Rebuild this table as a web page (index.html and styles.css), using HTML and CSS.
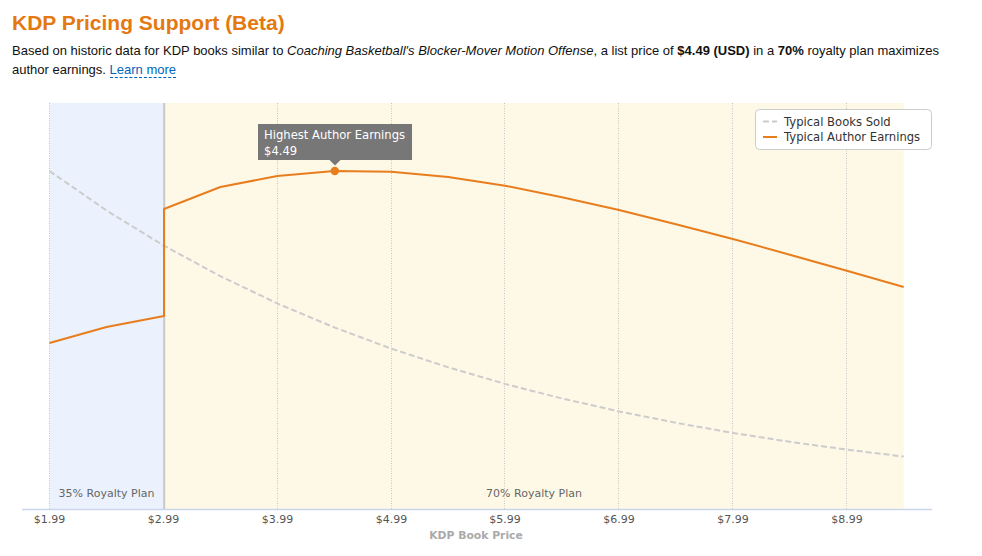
FILE: index.html
```html
<!DOCTYPE html>
<html lang="en">
<head>
<meta charset="utf-8">
<title>KDP Pricing Support (Beta)</title>
<link rel="stylesheet" href="styles.css">
</head>
<body>
<div class="header">
  <h1 class="title">KDP Pricing Support (Beta)</h1>
  <p class="summary"><span>Based on historic data for KDP books similar to </span><i>Coaching Basketball's Blocker-Mover Motion Offense</i><span>, a list price of </span><b>$4.49 (USD)</b><span> in a </span><b>70%</b><span> royalty plan maximizes</span><br><span>author earnings. </span><a class="learn" href="#">Learn more</a></p>
</div>
<svg class="chart" width="982" height="468" viewBox="0 88 982 468" xmlns="http://www.w3.org/2000/svg">
  <rect class="band-35" x="49.5" y="103" width="114.5" height="406"/>
  <rect class="band-70" x="164" y="103" width="739.7" height="406"/>
  <g class="grid">
    <line x1="49.5" y1="103" x2="49.5" y2="509"/>
    <line x1="277.5" y1="103" x2="277.5" y2="509"/>
    <line x1="391.5" y1="103" x2="391.5" y2="509"/>
    <line x1="504.5" y1="103" x2="504.5" y2="509"/>
    <line x1="618.5" y1="103" x2="618.5" y2="509"/>
    <line x1="732.5" y1="103" x2="732.5" y2="509"/>
    <line x1="846.5" y1="103" x2="846.5" y2="509"/>
  </g>
  <rect class="divider" x="163.2" y="103" width="2" height="406"/>
  <text class="plan" x="106.5" y="497">35% Royalty Plan</text>
  <text class="plan" x="534" y="497">70% Royalty Plan</text>
  <line class="axis" x1="22" y1="509.5" x2="932" y2="509.5"/>
  <g class="ticks">
    <text x="49.5" y="523">$1.99</text>
    <text x="163.5" y="523">$2.99</text>
    <text x="277.5" y="523">$3.99</text>
    <text x="391.5" y="523">$4.99</text>
    <text x="505" y="523">$5.99</text>
    <text x="619" y="523">$6.99</text>
    <text x="733" y="523">$7.99</text>
    <text x="847" y="523">$8.99</text>
  </g>
  <text class="axis-title" x="476" y="539">KDP Book Price</text>
  <polyline class="sold" points="49.5,171 106.5,210.5 163.4,245.4 220.4,276.2 277.3,303.4 334.3,327.4 391.2,348.6 448.2,367.3 505.1,383.9 562,398.5 619,411.4 675.9,422.8 732.9,432.9 789.8,441.8 846.8,449.6 903.7,456.6"/>
  <polyline class="earn" points="49.5,343 106.5,327 164,316 164,209 220.4,187 277.3,176 334.3,171 391.2,171.7 448.2,177 505.1,185.7 562,197.2 619,210 675.9,224.3 732.9,239 789.8,254.7 846.8,270.7 903.7,287"/>
  <circle class="peak" cx="334.8" cy="171" r="4.2"/>
  <g class="tooltip">
    <rect x="258" y="124" width="154" height="36"/>
    <polygon points="329.5,160 340.5,160 335,165.5"/>
    <text x="264" y="139">Highest Author Earnings</text>
    <text x="264" y="154.5">$4.49</text>
  </g>
  <g class="legend">
    <rect x="755.5" y="109.5" width="176" height="40" rx="4" ry="4"/>
    <line class="sold" x1="763" y1="121.5" x2="777" y2="121.5"/>
    <line class="earn" x1="763" y1="137" x2="777" y2="137"/>
    <text x="784" y="126">Typical Books Sold</text>
    <text x="784" y="141">Typical Author Earnings</text>
  </g>
</svg>
</body>
</html>
```

FILE: styles.css
```css
html, body {
  margin: 0;
  padding: 0;
  background: #ffffff;
}

body {
  width: 982px;
  height: 556px;
  overflow: hidden;
  font-family: "Liberation Sans", Arial, sans-serif;
  color: #111111;
}

.header {
  height: 88px;
  box-sizing: border-box;
  padding: 11px 12px 0 12px;
}

.title {
  margin: 0;
  font-size: 21px;
  line-height: 24px;
  font-weight: bold;
  color: #e47911;
}

.summary {
  margin: 6px 0 0 0;
  font-size: 13px;
  line-height: 19px;
  white-space: nowrap;
}

.learn {
  color: #0066c0;
  text-decoration: none;
  border-bottom: 1px dashed #0066c0;
}

.chart {
  display: block;
  font-family: "DejaVu Sans", Verdana, sans-serif;
}

.band-35 {
  fill: #ebf2fd;
}

.band-70 {
  fill: #fef9e7;
}

.grid line {
  stroke: #c4c4c4;
  stroke-width: 1;
  stroke-dasharray: 1 1.5;
}

.divider {
  fill: #c8c8c8;
}

.plan {
  font-size: 11px;
  fill: #666666;
  text-anchor: middle;
}

.axis {
  stroke: #ccd6eb;
  stroke-width: 1.5;
}

.ticks text {
  font-size: 11px;
  fill: #555555;
  text-anchor: middle;
}

.axis-title {
  font-size: 10.8px;
  font-weight: bold;
  fill: #aaaaaa;
  text-anchor: middle;
}

.sold {
  fill: none;
  stroke: #cccccc;
  stroke-width: 2;
  stroke-dasharray: 6 3;
}

.earn {
  fill: none;
  stroke: #e87d1e;
  stroke-width: 2;
  stroke-linejoin: round;
}

.peak {
  fill: #e87d1e;
}

.tooltip rect,
.tooltip polygon {
  fill: #777777;
}

.tooltip text {
  font-size: 11.6px;
  fill: #ffffff;
}

.legend rect {
  fill: #ffffff;
  stroke: #cccccc;
  stroke-width: 1;
}

.legend text {
  font-size: 11.6px;
  fill: #333333;
}
```
